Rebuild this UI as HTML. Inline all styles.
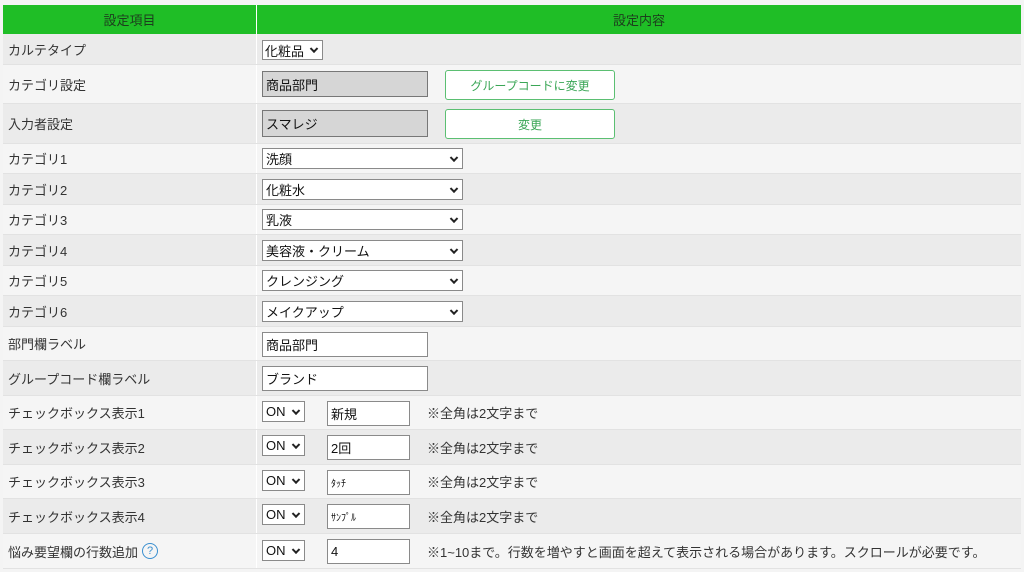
<!DOCTYPE html><html><head><meta charset="utf-8"><style>
body{margin:0;width:1024px;height:572px;background:#f4f4f4;font-family:"Liberation Sans","Noto Sans CJK JP",sans-serif;font-size:13px;color:#333;position:relative;overflow:hidden}
.r{position:absolute;left:3px;width:1018px;border-bottom:1px solid #e2e2e2}
.a{background:#ebebeb}.b{background:#f5f5f5}
.l{position:absolute;left:5px;top:0;bottom:0;display:flex;align-items:center}
.sep{position:absolute;left:253px;top:0;bottom:0;width:1px;background:#fff}
.x{position:absolute;box-sizing:border-box;background:#fff;border:1px solid #8a8a8a;display:flex;align-items:center;padding-left:3px;color:#111;font-size:13px}
.sel:after{content:"";position:absolute;right:5px;top:50%;width:4px;height:4px;border-right:2px solid #222;border-bottom:2px solid #222;transform:translateY(-70%) rotate(45deg)}
.g{background:#d6d6d6;border:1px solid #777}
.btn{position:absolute;box-sizing:border-box;border:1px solid #5bbf72;border-radius:3px;background:#fff;color:#3aa656;display:flex;align-items:center;justify-content:center;font-size:12px}
.n{position:absolute;left:424px;color:#333;display:flex;align-items:center;top:0;bottom:0}
.q{display:inline-flex;align-items:center;justify-content:center;box-sizing:border-box;width:16px;height:16px;border:1.5px solid #3a8fd0;border-radius:50%;color:#3a8fd0;font-size:11px;margin-left:4px}
</style></head><body>
<div style="position:absolute;left:3px;top:5px;width:1018px;height:29px;background:#1fbe26;color:#1d3d1d">
<div style="position:absolute;left:0;width:253px;top:0;bottom:0;display:flex;align-items:center;justify-content:center">設定項目</div>
<div class="sep"></div>
<div style="position:absolute;left:254px;right:0;top:0;bottom:0;display:flex;align-items:center;justify-content:center">設定内容</div></div>

<div class="r a" style="top:34px;height:30px"><div class="l">カルテタイプ</div><div class="sep"></div>
<div class="x sel" style="left:259px;top:6px;width:61px;height:20px;padding-left:2px">化粧品</div></div>

<div class="r b" style="top:65px;height:38px"><div class="l">カテゴリ設定</div><div class="sep"></div>
<div class="x g" style="left:259px;top:6px;width:166px;height:26px">商品部門</div>
<div class="btn" style="left:442px;top:5px;width:170px;height:30px">グループコードに変更</div></div>

<div class="r a" style="top:104px;height:39px"><div class="l">入力者設定</div><div class="sep"></div>
<div class="x g" style="left:259px;top:6px;width:166px;height:27px">スマレジ</div>
<div class="btn" style="left:442px;top:5px;width:170px;height:30px">変更</div></div>

<div class="r b" style="top:144px;height:29px"><div class="l">カテゴリ1</div><div class="sep"></div><div class="x sel" style="left:259px;top:4px;width:201px;height:21px">洗顔</div></div>
<div class="r a" style="top:174px;height:30px"><div class="l">カテゴリ2</div><div class="sep"></div><div class="x sel" style="left:259px;top:5px;width:201px;height:21px">化粧水</div></div>
<div class="r b" style="top:205px;height:29px"><div class="l">カテゴリ3</div><div class="sep"></div><div class="x sel" style="left:259px;top:4px;width:201px;height:21px">乳液</div></div>
<div class="r a" style="top:235px;height:30px"><div class="l">カテゴリ4</div><div class="sep"></div><div class="x sel" style="left:259px;top:5px;width:201px;height:21px">美容液・クリーム</div></div>
<div class="r b" style="top:266px;height:29px"><div class="l">カテゴリ5</div><div class="sep"></div><div class="x sel" style="left:259px;top:4px;width:201px;height:21px">クレンジング</div></div>
<div class="r a" style="top:296px;height:30px"><div class="l">カテゴリ6</div><div class="sep"></div><div class="x sel" style="left:259px;top:5px;width:201px;height:21px">メイクアップ</div></div>

<div class="r b" style="top:327px;height:33px"><div class="l">部門欄ラベル</div><div class="sep"></div><div class="x" style="left:259px;top:5px;width:166px;height:25px">商品部門</div></div>
<div class="r a" style="top:361px;height:34px"><div class="l">グループコード欄ラベル</div><div class="sep"></div><div class="x" style="left:259px;top:5px;width:166px;height:25px">ブランド</div></div>

<div class="r b" style="top:396px;height:33px"><div class="l">チェックボックス表示1</div><div class="sep"></div><div class="x sel" style="left:259px;top:5px;width:43px;height:21px">ON</div><div class="x" style="left:324px;top:5px;width:83px;height:25px">新規</div><div class="n">※全角は2文字まで</div></div>
<div class="r a" style="top:430px;height:34px"><div class="l">チェックボックス表示2</div><div class="sep"></div><div class="x sel" style="left:259px;top:5px;width:43px;height:21px">ON</div><div class="x" style="left:324px;top:5px;width:83px;height:25px">2回</div><div class="n">※全角は2文字まで</div></div>
<div class="r b" style="top:465px;height:33px"><div class="l">チェックボックス表示3</div><div class="sep"></div><div class="x sel" style="left:259px;top:5px;width:43px;height:21px">ON</div><div class="x" style="left:324px;top:5px;width:83px;height:25px;font-size:10px">ﾀｯﾁ</div><div class="n">※全角は2文字まで</div></div>
<div class="r a" style="top:499px;height:34px"><div class="l">チェックボックス表示4</div><div class="sep"></div><div class="x sel" style="left:259px;top:5px;width:43px;height:21px">ON</div><div class="x" style="left:324px;top:5px;width:83px;height:25px;font-size:10px">ｻﾝﾌﾟﾙ</div><div class="n">※全角は2文字まで</div></div>
<div class="r b" style="top:534px;height:34px"><div class="l">悩み要望欄の行数追加<span class="q">?</span></div><div class="sep"></div><div class="x sel" style="left:259px;top:6px;width:43px;height:21px">ON</div><div class="x" style="left:324px;top:5px;width:83px;height:25px">4</div><div class="n">※1~10まで。行数を増やすと画面を超えて表示される場合があります。スクロールが必要です。</div></div>
</body></html>
